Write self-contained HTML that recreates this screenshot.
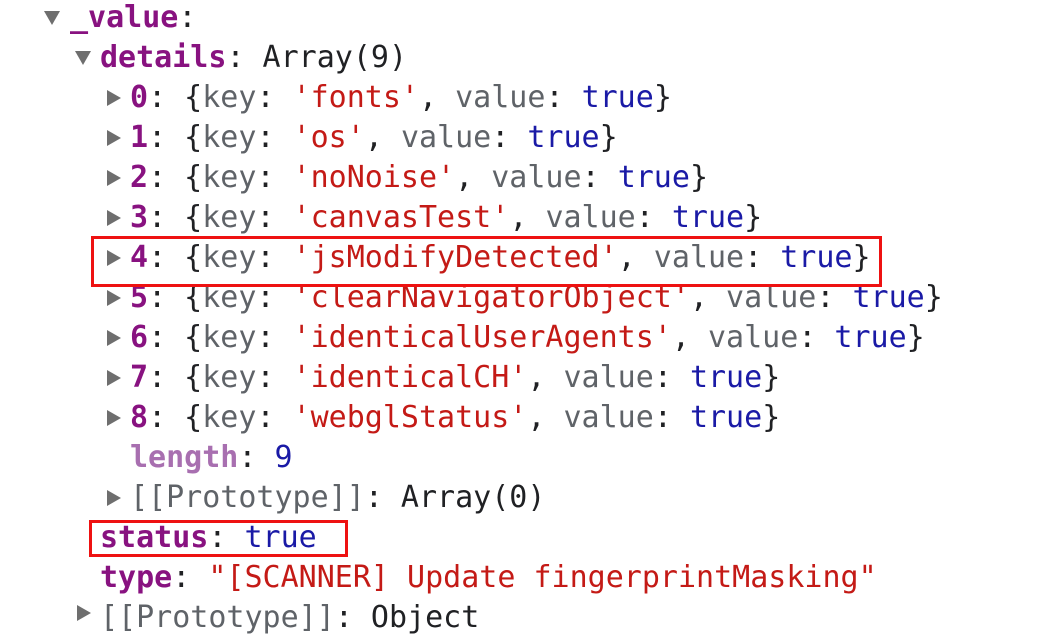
<!DOCTYPE html>
<html><head><meta charset="utf-8"><style>
body{margin:0;width:1046px;height:612px;overflow:hidden;background:#fff;position:relative;font-family:"DejaVu Sans Mono","Liberation Mono",monospace;font-size:30px;}
.l{position:absolute;height:40px;line-height:40px;white-space:pre;color:#202124}
.k{color:#881280;font-weight:bold}
.nk{color:#a86fb0;font-weight:bold}
.g{color:#5f6368}
.s{color:#c41a16}
.b{color:#1a1aa6}
.tr{position:absolute;width:0;height:0;border-top:8px solid transparent;border-bottom:8px solid transparent;border-left:14px solid #6e6e6e}
.td{position:absolute;width:0;height:0;border-left:8px solid transparent;border-right:8px solid transparent;border-top:14px solid #6e6e6e}
.box{position:absolute;border:3px solid #ee1111;box-sizing:border-box}
</style></head><body>
<div class="td" style="left:44px;top:11px"></div>
<div class="l" style="left:70px;top:-2px"><span class="k">_value</span>:</div>
<div class="td" style="left:75px;top:51px"></div>
<div class="l" style="left:100px;top:38px"><span class="k">details</span>: Array(9)</div>

<div class="tr" style="left:107px;top:90px"></div>
<div class="l" style="left:130px;top:78px"><span class="k">0</span>: {<span class="g">key</span>: <span class="s">'fonts'</span>, <span class="g">value</span>: <span class="b">true</span>}</div>
<div class="tr" style="left:107px;top:130px"></div>
<div class="l" style="left:130px;top:118px"><span class="k">1</span>: {<span class="g">key</span>: <span class="s">'os'</span>, <span class="g">value</span>: <span class="b">true</span>}</div>
<div class="tr" style="left:107px;top:170px"></div>
<div class="l" style="left:130px;top:158px"><span class="k">2</span>: {<span class="g">key</span>: <span class="s">'noNoise'</span>, <span class="g">value</span>: <span class="b">true</span>}</div>
<div class="tr" style="left:107px;top:210px"></div>
<div class="l" style="left:130px;top:198px"><span class="k">3</span>: {<span class="g">key</span>: <span class="s">'canvasTest'</span>, <span class="g">value</span>: <span class="b">true</span>}</div>
<div class="tr" style="left:107px;top:250px"></div>
<div class="l" style="left:130px;top:238px"><span class="k">4</span>: {<span class="g">key</span>: <span class="s">'jsModifyDetected'</span>, <span class="g">value</span>: <span class="b">true</span>}</div>
<div class="tr" style="left:107px;top:290px"></div>
<div class="l" style="left:130px;top:278px"><span class="k">5</span>: {<span class="g">key</span>: <span class="s">'clearNavigatorObject'</span>, <span class="g">value</span>: <span class="b">true</span>}</div>
<div class="tr" style="left:107px;top:330px"></div>
<div class="l" style="left:130px;top:318px"><span class="k">6</span>: {<span class="g">key</span>: <span class="s">'identicalUserAgents'</span>, <span class="g">value</span>: <span class="b">true</span>}</div>
<div class="tr" style="left:107px;top:370px"></div>
<div class="l" style="left:130px;top:358px"><span class="k">7</span>: {<span class="g">key</span>: <span class="s">'identicalCH'</span>, <span class="g">value</span>: <span class="b">true</span>}</div>
<div class="tr" style="left:107px;top:410px"></div>
<div class="l" style="left:130px;top:398px"><span class="k">8</span>: {<span class="g">key</span>: <span class="s">'webglStatus'</span>, <span class="g">value</span>: <span class="b">true</span>}</div>
<div class="l" style="left:130px;top:438px"><span class="nk">length</span>: <span class="b">9</span></div>
<div class="tr" style="left:107px;top:490px"></div>
<div class="l" style="left:130px;top:478px"><span class="g">[[Prototype]]</span>: Array(0)</div>
<div class="l" style="left:100px;top:518px"><span class="k">status</span>: <span class="b">true</span></div>
<div class="l" style="left:100px;top:558px"><span class="k">type</span>: <span class="s">"[SCANNER] Update fingerprintMasking"</span></div>
<div class="tr" style="left:77px;top:605px"></div>
<div class="l" style="left:100px;top:598px"><span class="g">[[Prototype]]</span>: Object</div>

<div class="box" style="left:91px;top:236px;width:791px;height:51px"></div>
<div class="box" style="left:89px;top:520px;width:259px;height:37px"></div>
</body></html>
